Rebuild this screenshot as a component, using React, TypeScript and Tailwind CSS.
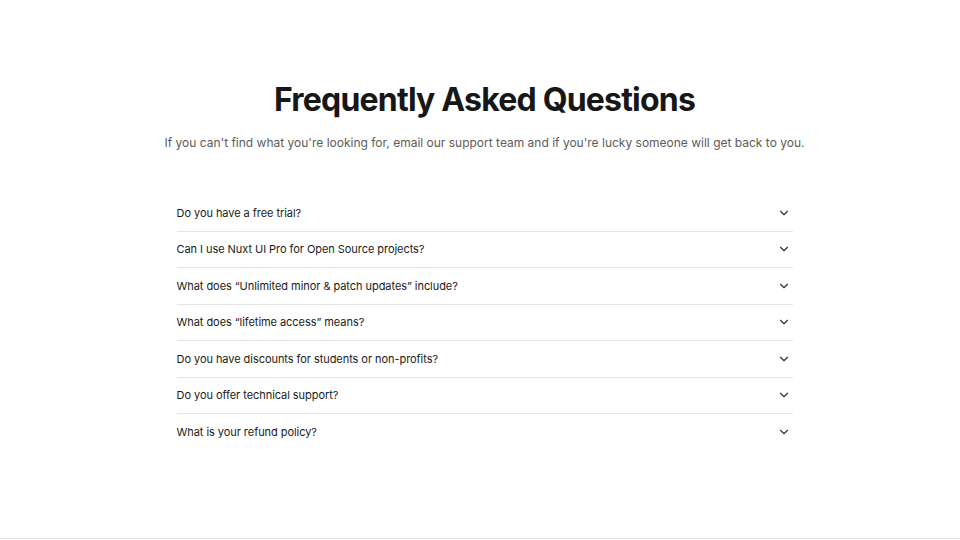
import { ChevronDown } from "lucide-react";

const faqs = [
  "Do you have a free trial?",
  "Can I use Nuxt UI Pro for Open Source projects?",
  "What does \u201cUnlimited minor & patch updates\u201d include?",
  "What does \u201clifetime access\u201d means?",
  "Do you have discounts for students or non-profits?",
  "Do you offer technical support?",
  "What is your refund policy?",
];

export default function App() {
  return (
    <div className="w-[960px] h-[540px] bg-white flex flex-col font-['Inter',sans-serif] text-[#171717]">
      <div className="flex-1 flex flex-col items-center pt-[80px] pl-[9px]">
        <h1 className="text-[32px] leading-[40px] font-bold tracking-[-0.025em]">Frequently Asked Questions</h1>
        <p className="mt-[13px] text-[12px] leading-[20px] text-[#5c5c5c]">
          If you can't find what you're looking for, email our support team and if you're lucky someone will get back to you.
        </p>
        <div className="mt-[42px] w-[616px] flex flex-col">
          {faqs.map((q, i) => (
            <div
              key={q}
              className={`flex items-center justify-between h-[36.5px] ${i < faqs.length - 1 ? "border-b border-[#e5e5e5]" : ""}`}
            >
              <span className="text-[11px] tracking-[-0.005em] text-[#1a1a1a]">{q}</span>
              <ChevronDown className="w-[14px] h-[14px] mr-[2px] text-[#333]" strokeWidth={2} />
            </div>
          ))}
        </div>
      </div>
      <div className="h-[2px] border-t border-[#e5e5e5]" />
    </div>
  );
}
